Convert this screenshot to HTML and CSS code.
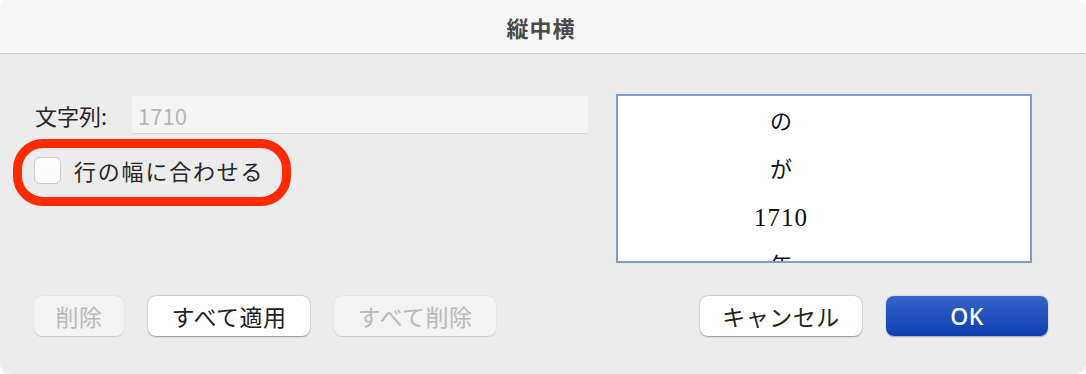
FILE: index.html
```html
<!DOCTYPE html>
<html lang="ja">
<head>
<meta charset="utf-8">
<title>縦中横</title>
<link rel="stylesheet" href="styles.css">
</head>
<body>
<div class="window">
  <div class="titlebar">縦中横</div>
  <div class="content">
    <div class="top">
      <div class="left">
        <div class="field-row">
          <span class="field-label">文字列:</span>
          <div class="input">1710</div>
        </div>
        <div class="check-row">
          <span class="checkbox"></span>
          <span class="check-label">行の幅に合わせる</span>
        </div>
      </div>
      <div class="preview">
        <div class="preview-col">
          <div class="pline">の</div>
          <div class="pline">が</div>
          <div class="pline num">1710</div>
          <div class="pline">年</div>
        </div>
      </div>
    </div>
    <div class="buttons">
      <div class="group">
        <button class="btn disabled small">削除</button>
        <button class="btn">すべて適用</button>
        <button class="btn disabled">すべて削除</button>
      </div>
      <div class="group">
        <button class="btn">キャンセル</button>
        <button class="btn primary">OK</button>
      </div>
    </div>
  </div>
  <div class="annotation"></div>
</div>
</body>
</html>
```
FILE: styles.css
```css
* { box-sizing: border-box; }
html, body {
  margin: 0;
  padding: 0;
  background: #ffffff;
}
body {
  font-family: "Noto Sans CJK JP", "Noto Sans", sans-serif;
  color: #262626;
}
.window {
  position: relative;
  width: 1086px;
  height: 374px;
  background: #ececec;
  border-radius: 6px 12px 10px 10px;
  overflow: hidden;
  display: flex;
  flex-direction: column;
}
.titlebar {
  height: 54px;
  flex: none;
  background: #f7f7f7;
  border-bottom: 1px solid #cdcdcd;
  display: flex;
  align-items: center;
  justify-content: center;
  font-size: 22px;
  font-weight: 700;
  color: #4a4a4a;
  padding-right: 4px;
  letter-spacing: 1px;
}
.content {
  flex: 1;
  padding: 40px 54px 0 34px;
  display: flex;
  flex-direction: column;
}
.top {
  display: flex;
  gap: 28px;
}
.left {
  width: 554px;
  padding-top: 2px;
  display: flex;
  flex-direction: column;
}
.field-row {
  display: flex;
  align-items: center;
  height: 38px;
}
.field-label {
  width: 98px;
  padding-left: 1px;
  font-size: 22px;
  color: #262626;
}
.input {
  flex: 1;
  height: 38px;
  background: #f4f4f4;
  border-bottom: 1px solid #d6d6d6;
  font-size: 22px;
  color: #b6b6b6;
  padding-left: 6px;
  display: flex;
  align-items: center;
}
.check-row {
  display: flex;
  align-items: center;
  margin-top: 23px;
  height: 26px;
}
.checkbox {
  width: 27px;
  height: 27px;
  border-radius: 6px;
  background: linear-gradient(#ffffff, #f9f9f9);
  border: 1px solid #c9c9c9;
  flex: none;
}
.check-label {
  margin-left: 13px;
  font-size: 22px;
  letter-spacing: 1.8px;
  color: #262626;
}
.preview {
  width: 416px;
  height: 169px;
  background: #ffffff;
  border: 2px solid #7f9dd4;
  overflow: hidden;
}
.preview-col {
  width: 120px;
  margin-left: 103px;
  padding-top: 2px;
  display: flex;
  flex-direction: column;
  align-items: center;
  font-family: "Liberation Serif", "Noto Sans CJK JP", serif;
  font-size: 22px;
  color: #111111;
}
.pline {
  height: 48px;
  line-height: 48px;
}
.pline.num {
  font-size: 25px;
  letter-spacing: 1px;
}
.buttons {
  margin-top: 33px;
  display: flex;
  justify-content: space-between;
  margin-right: -16px;
}
.group {
  display: flex;
  gap: 24px;
}
.btn {
  width: 162px;
  height: 40px;
  border: none;
  border-radius: 8px;
  background: #ffffff;
  box-shadow: 0 0.5px 1.5px rgba(0, 0, 0, 0.35), 0 0 0 0.5px rgba(0, 0, 0, 0.08);
  font-family: "Noto Sans CJK JP", "Noto Sans", sans-serif;
  font-size: 23px;
  color: #222222;
  padding: 0;
  letter-spacing: 0.5px;
}
.btn.small { width: 90px; }
.btn.disabled {
  background: #f3f3f3;
  color: #b9b9b9;
  box-shadow: 0 0.5px 1px rgba(0, 0, 0, 0.12), 0 0 0 0.5px rgba(0, 0, 0, 0.04);
}
.btn.primary {
  background: linear-gradient(#3564c9, #0d3eb0);
  color: #ffffff;
  font-family: "Noto Sans", sans-serif;
  font-size: 23px;
  font-weight: 500;
  box-shadow: 0 0.5px 1.5px rgba(0, 0, 0, 0.3);
}
.annotation {
  position: absolute;
  left: 13px;
  top: 139px;
  width: 278px;
  height: 67px;
  border: 9px solid #ff2a00;
  border-radius: 30px;
}
```
